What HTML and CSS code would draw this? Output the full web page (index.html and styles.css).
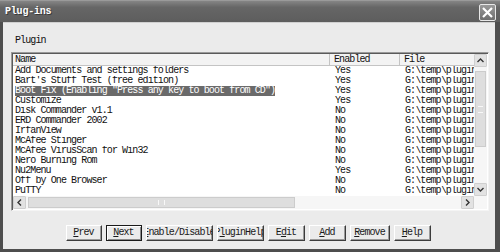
FILE: index.html
```html
<!DOCTYPE html>
<html lang="en">
<head>
    <meta charset="UTF-8">
    <title>Plug-ins</title>
    <link rel="stylesheet" href="styles.css">
</head>
<body>
    <div class="window">
        <div class="titlebar">
            <span class="title">Plug-ins</span>
            <div class="close-btn">
                <svg width="13" height="13" viewBox="0 0 13 13"><path d="M2 2 L11 11 M11 2 L2 11" stroke="#fff" stroke-width="2.2" fill="none"/></svg>
            </div>
        </div>

        <div class="dialog">
            <div class="group-label">Plugin</div>

            <div class="listview">
                <div class="lv-table">
                    <div class="lv-row lv-head">
                        <span class="cell name">Name</span>
                        <span class="cell enabled">Enabled</span>
                        <span class="cell file">File</span>
                    </div>
                    <div class="lv-row"><span class="cell name">Add Documents and settings folders</span><span class="cell enabled">Yes</span><span class="cell file">G:\temp\plugin</span></div>
                    <div class="lv-row"><span class="cell name">Bart's Stuff Test (free edition)</span><span class="cell enabled">Yes</span><span class="cell file">G:\temp\plugin</span></div>
                    <div class="lv-row"><span class="cell name"><span class="selected">Boot Fix (Enabling "Press any key to boot from CD")</span></span><span class="cell enabled">Yes</span><span class="cell file">G:\temp\plugin</span></div>
                    <div class="lv-row"><span class="cell name">Customize</span><span class="cell enabled">Yes</span><span class="cell file">G:\temp\plugin</span></div>
                    <div class="lv-row"><span class="cell name">Disk Commander v1.1</span><span class="cell enabled">No</span><span class="cell file">G:\temp\plugin</span></div>
                    <div class="lv-row"><span class="cell name">ERD Commander 2002</span><span class="cell enabled">No</span><span class="cell file">G:\temp\plugin</span></div>
                    <div class="lv-row"><span class="cell name">IrfanView</span><span class="cell enabled">No</span><span class="cell file">G:\temp\plugin</span></div>
                    <div class="lv-row"><span class="cell name">McAfee Stinger</span><span class="cell enabled">No</span><span class="cell file">G:\temp\plugin</span></div>
                    <div class="lv-row"><span class="cell name">McAfee VirusScan for Win32</span><span class="cell enabled">No</span><span class="cell file">G:\temp\plugin</span></div>
                    <div class="lv-row"><span class="cell name">Nero Burning Rom</span><span class="cell enabled">No</span><span class="cell file">G:\temp\plugin</span></div>
                    <div class="lv-row"><span class="cell name">Nu2Menu</span><span class="cell enabled">Yes</span><span class="cell file">G:\temp\plugin</span></div>
                    <div class="lv-row"><span class="cell name">Off by One Browser</span><span class="cell enabled">No</span><span class="cell file">G:\temp\plugin</span></div>
                    <div class="lv-row"><span class="cell name">PuTTY</span><span class="cell enabled">No</span><span class="cell file">G:\temp\plugin</span></div>
                </div>

                <!-- vertical scrollbar -->
                <div class="vscroll">
                    <div class="sb-btn">
                        <svg width="7" height="5" viewBox="0 0 7 5"><path d="M0.5 4 L3.5 1 L6.5 4" stroke="#333" stroke-width="1.4" fill="none"/></svg>
                    </div>
                    <div class="v-track-top"></div>
                    <div class="v-thumb"><span class="grip-v"></span></div>
                    <div class="v-track"></div>
                    <div class="sb-btn">
                        <svg width="7" height="5" viewBox="0 0 7 5"><path d="M0.5 1 L3.5 4 L6.5 1" stroke="#333" stroke-width="1.4" fill="none"/></svg>
                    </div>
                </div>

                <!-- horizontal scrollbar -->
                <div class="hscroll">
                    <div class="sb-btn">
                        <svg width="5" height="7" viewBox="0 0 5 7"><path d="M4 0.5 L1 3.5 L4 6.5" stroke="#333" stroke-width="1.4" fill="none"/></svg>
                    </div>
                    <div class="h-thumb"><span class="grip-h"></span></div>
                    <div class="h-track"></div>
                    <div class="sb-btn">
                        <svg width="5" height="7" viewBox="0 0 5 7"><path d="M1 0.5 L4 3.5 L1 6.5" stroke="#333" stroke-width="1.4" fill="none"/></svg>
                    </div>
                </div>
                <div class="corner"></div>
            </div>

            <div class="buttons">
                <div class="btn w36"><span><u>P</u>rev</span></div>
                <div class="btn w36 default"><span><u>N</u>ext</span></div>
                <div class="btn w67"><span><u>E</u>nable/Disable</span></div>
                <div class="btn w47"><span>P<u>l</u>uginHelp</span></div>
                <div class="btn w37"><span>E<u>d</u>it</span></div>
                <div class="btn w37"><span><u>A</u>dd</span></div>
                <div class="btn w40"><span><u>R</u>emove</span></div>
                <div class="btn w37"><span><u>H</u>elp</span></div>
            </div>
        </div>
    </div>
</body>
</html>
```

FILE: styles.css
```css
body {
    margin: 0;
    background: #ffffff;
    font-family: "Liberation Mono", "DejaVu Sans Mono", monospace;
    font-size: 10px;
    letter-spacing: -0.9px;
    color: #111111;
}
.window {
    width: 500px;
    height: 252px;
    box-sizing: border-box;
    background: #4e4e4e; /* dark frame */
    display: flex;
    flex-direction: column;
    overflow: hidden;
}
.titlebar {
    height: 22px;
    flex: none;
    display: flex;
    align-items: center;
    justify-content: space-between;
    padding: 0 4px 0 5px;
    background: linear-gradient(#858585, #666666 30%, #5d5d5d);
    border-top: 1px solid #9a9a9a;
    box-sizing: border-box;
}
.title {
    color: #ffffff;
    font-weight: bold;
    letter-spacing: -0.2px;
    text-shadow: 1px 1px 0 #3a3a3a;
}
.close-btn {
    width: 15px;
    height: 15px;
    border: 1px solid #e8e8e8;
    border-radius: 2px;
    background: linear-gradient(#9a9a9a, #6e6e6e);
    display: flex;
    align-items: center;
    justify-content: center;
    margin-top: 1px;
}
.dialog {
    flex: 1;
    margin: 0 5px 3px 3px;
    background: #ebebeb;
    border-top: 1px solid #d0d0d0;
    padding: 13px 6px 0 8px;
    display: flex;
    flex-direction: column;
}
.group-label {
    height: 10px;
    line-height: 10px;
    padding-left: 4px;
    margin-bottom: 6px;
}
.listview {
    height: 159px;
    box-sizing: border-box;
    border: 1px solid #9a9a9a;
    border-right-color: #f4f4f4;
    border-bottom-color: #f4f4f4;
    box-shadow: inset 1px 1px 0 #5a5a5a;
    padding: 1px 0 0 1px;
    background: #ffffff;
    display: grid;
    grid-template-columns: 461px 13px;
    grid-template-rows: 142px 13px;
}
.lv-table {
    overflow: hidden;
}
.lv-row {
    display: grid;
    grid-template-columns: 317px 70px 74px;
    height: 10px;
    line-height: 10px;
}
.lv-head {
    height: 12px;
    line-height: 12px;
    background: #f3f3f3;
    border-bottom: 1px solid #c4c4c4;
    box-sizing: border-box;
}
.cell {
    white-space: nowrap;
    overflow: hidden;
    padding-left: 5px;
}
.cell.name {
    padding-left: 2px;
}
.lv-head .cell.name,
.lv-head .cell.enabled {
    border-right: 1px solid #c4c4c4;
}
.lv-head .cell.enabled,
.lv-head .cell.file {
    padding-left: 4px;
}
.selected {
    background: #6a6a6a;
    color: #ffffff;
}

/* scrollbars */
.vscroll {
    display: flex;
    flex-direction: column;
    background: #f6f6f6;
}
.hscroll {
    display: flex;
    background: #f6f6f6;
}
.sb-btn {
    width: 13px;
    height: 13px;
    flex: none;
    box-sizing: border-box;
    background: #e2e2e2;
    border: 1px solid #cfcfcf;
    border-radius: 1px;
    display: flex;
    align-items: center;
    justify-content: center;
}
.v-track-top {
    height: 4px;
}
.v-thumb {
    height: 74px;
    margin: 0 1px;
    background: #dedede;
    border: 1px solid #cccccc;
    display: flex;
    align-items: center;
    justify-content: center;
}
.v-track {
    flex: 1;
}
.h-thumb {
    width: 265px;
    margin: 1px 0 1px 2px;
    background: #dedede;
    border: 1px solid #cccccc;
    display: flex;
    align-items: center;
    justify-content: center;
}
.h-track {
    flex: 1;
}
.grip-v {
    width: 5px;
    height: 5px;
    border-top: 1px solid #f8f8f8;
    border-bottom: 1px solid #f8f8f8;
}
.grip-h {
    width: 5px;
    height: 5px;
    border-left: 1px solid #f8f8f8;
    border-right: 1px solid #f8f8f8;
}
.corner {
    background: #f6f6f6;
}

/* button row */
.buttons {
    display: flex;
    justify-content: center;
    gap: 4px;
    margin-top: 14px;
    padding-right: 4px;
}
.btn {
    height: 16px;
    box-sizing: border-box;
    background: #ebebeb;
    border: 1px solid;
    border-color: #ffffff #3c3c3c #3c3c3c #ffffff;
    box-shadow: inset -1px -1px 0 #9a9a9a;
    display: flex;
    align-items: center;
    justify-content: center;
    overflow: hidden;
    white-space: nowrap;
    line-height: 12px;
    color: #1a1a1a;
}
.btn span {
    flex: none;
}
.btn.default {
    border-color: #1a1a1a;
    box-shadow: inset 1px 1px 0 #ffffff, inset -1px -1px 0 #8a8a8a;
}
.w36 { width: 36px; }
.w37 { width: 37px; }
.w40 { width: 40px; }
.w47 { width: 47px; }
.w67 { width: 67px; }
```
